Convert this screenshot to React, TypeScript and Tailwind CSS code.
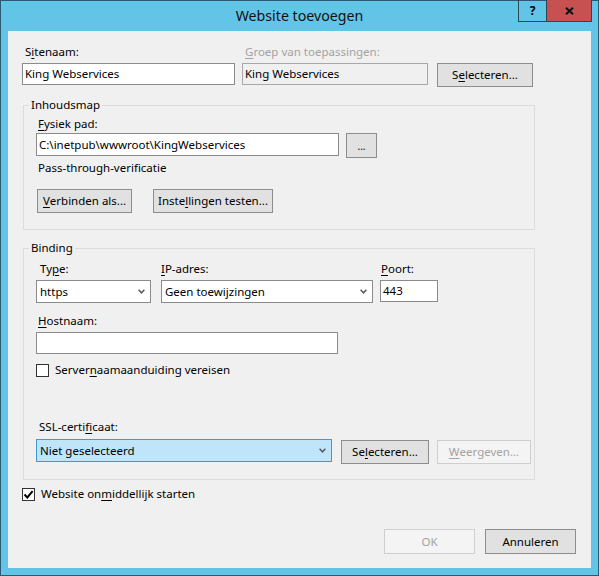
import type { ReactNode } from "react";

function U({ children }: { children: ReactNode }) {
  return <span className="underline decoration-1 underline-offset-[2px]">{children}</span>;
}

function TextBox({
  value,
  className = "",
  disabled = false,
}: {
  value?: string;
  className?: string;
  disabled?: boolean;
}) {
  return (
    <div
      className={`flex items-center border px-[2px] leading-[16px] ${
        disabled ? "border-[#a8a8a8] bg-[#f0f0f0]" : "border-[#8b8b8b] bg-white"
      } ${className}`}
    >
      {value}
    </div>
  );
}

function Chevron({ color = "#5a5a5a" }: { color?: string }) {
  return (
    <svg width="7" height="5" viewBox="0 0 7 5" fill="none">
      <path d="M0.6 0.8 3.5 3.8 6.4 0.8" stroke={color} strokeWidth="1.5" />
    </svg>
  );
}

function ComboBox({
  value,
  className = "",
  focused = false,
}: {
  value: string;
  className?: string;
  focused?: boolean;
}) {
  return (
    <div
      className={`flex h-[23px] items-center border pl-[3px] leading-[16px] ${
        focused ? "border-[#3c9bdc] bg-[#bfe5fb]" : "border-[#8b8b8b] bg-white"
      } ${className}`}
    >
      <span className="flex-1">{value}</span>
      <span className="flex w-[17px] justify-center">
        <Chevron />
      </span>
    </div>
  );
}

function Button({
  children,
  className = "",
  disabled = false,
}: {
  children: ReactNode;
  className?: string;
  disabled?: boolean;
}) {
  return (
    <button
      type="button"
      disabled={disabled}
      className={`flex h-[24px] items-center justify-center border leading-[16px] ${
        disabled
          ? "border-[#cfcfcf] bg-[#f4f4f4] text-[#a3a3a3]"
          : "border-[#8d8d8d] bg-[#e1e1e1] text-black"
      } ${className}`}
    >
      {children}
    </button>
  );
}

function CheckBox({ checked = false }: { checked?: boolean }) {
  return (
    <span className="flex h-[13px] w-[13px] items-center justify-center border border-[#333333] bg-white">
      {checked ? (
        <svg width="11" height="11" viewBox="0 0 11 11" fill="none">
          <path d="M1.5 5.5 4.3 8.4 9.6 2.2" stroke="#000" strokeWidth="2" />
        </svg>
      ) : null}
    </span>
  );
}

export default function App() {
  return (
    <div className="h-[576px] w-[599px] border border-[#2b5a72] bg-[#62c5e8] font-['Noto_Sans',sans-serif] text-[11.5px] text-black">
      {/* title bar */}
      <div className="relative h-[30px]">
        <div className="text-center text-[14.2px] leading-[29px] text-[#111]">Website toevoegen</div>
        <div className="absolute right-[6px] top-[-1px] flex h-[22px] border border-t-0 border-[#2c4656]">
          <div className="flex w-[28px] items-center justify-center border-r border-[#2c4656] text-[12px] font-bold leading-none">
            ?
          </div>
          <div className="flex w-[44px] items-center justify-center bg-[#c75050]">
            <svg width="9" height="8" viewBox="0 0 9 8" fill="none">
              <path d="M1 0.8 8 7.2M8 0.8 1 7.2" stroke="#111" strokeWidth="2" />
            </svg>
          </div>
        </div>
      </div>

      {/* client area */}
      <div className="ml-[7px] flex h-[537px] w-[583px] flex-col bg-[#f0f0f0] pt-[13px] leading-[16px]">
        <div className="flex h-[16px]">
          <div className="ml-[17px] w-[220px]">
            S<U>i</U>tenaam:
          </div>
          <div className="text-[#a3a3a3]">
            <U>G</U>roep van toepassingen:
          </div>
        </div>
        <div className="mt-[3px] flex items-start">
          <TextBox value="King Webservices" className="ml-[14px] h-[22px] w-[213px]" />
          <TextBox value="King Webservices" disabled className="ml-[7px] h-[22px] w-[186px]" />
          <Button className="ml-[9px] w-[96px]">
            S<U>e</U>lecteren...
          </Button>
        </div>

        <fieldset className="ml-[15px] mt-[10px] w-[512px] border border-[#dcdcdc] pb-[16px]">
          <legend className="ml-[5px] px-[2px] leading-[16px]">Inhoudsmap</legend>
          <div className="ml-[14px] mt-[3px] h-[16px]">
            <U>F</U>ysiek pad:
          </div>
          <div className="mt-[1px] flex items-start">
            <TextBox value="C:\inetpub\wwwroot\KingWebservices" className="ml-[12px] h-[23px] w-[303px]" />
            <Button className="ml-[7px] h-[25px] w-[31px] text-[10px]">...</Button>
          </div>
          <div className="ml-[14px] mt-[2px] h-[16px]">Pass-through-verificatie</div>
          <div className="mt-[13px] flex">
            <Button className="ml-[13px] w-[95px]">
              <U>V</U>erbinden als...
            </Button>
            <Button className="ml-[21px] w-[120px]">
              Inste<U>l</U>lingen testen...
            </Button>
          </div>
        </fieldset>

        <fieldset className="ml-[15px] mt-[10px] w-[512px] border border-[#dcdcdc] pb-[15px]">
          <legend className="ml-[5px] px-[2px] leading-[16px]">Binding</legend>
          <div className="mt-[5px] flex items-start">
            <div className="ml-[12px] flex w-[115px] flex-col">
              <div className="h-[16px] pl-[4px]">
                Ty<U>p</U>e:
              </div>
              <ComboBox value="https" className="mt-[3px]" />
            </div>
            <div className="ml-[10px] flex w-[212px] flex-col">
              <div className="h-[16px]">
                <U>I</U>P-adres:
              </div>
              <ComboBox value="Geen toewijzingen" className="mt-[3px]" />
            </div>
            <div className="ml-[7px] flex w-[58px] flex-col">
              <div className="h-[16px] pl-[1px]">
                <U>P</U>oort:
              </div>
              <TextBox value="443" className="mt-[3px] h-[22px]" />
            </div>
          </div>
          <div className="ml-[14px] mt-[10px] h-[16px]">
            <U>H</U>ostnaam:
          </div>
          <TextBox className="ml-[12px] mt-[3px] h-[22px] w-[302px]" />
          <div className="mt-[8px] flex h-[16px] items-center">
            <span className="ml-[12px]">
              <CheckBox />
            </span>
            <span className="ml-[6px]">
              Server<U>n</U>aamaanduiding vereisen
            </span>
          </div>
          <div className="ml-[15px] mt-[41px] h-[16px]">
            SSL-certi<U>f</U>icaat:
          </div>
          <div className="mt-[4px] flex items-start">
            <ComboBox value="Niet geselecteerd" focused className="ml-[12px] w-[296px]" />
            <Button className="ml-[9px] mt-[1px] w-[88px]">
              Se<U>l</U>ecteren...
            </Button>
            <Button disabled className="ml-[8px] mt-[1px] w-[94px]">
              <U>W</U>eergeven...
            </Button>
          </div>
        </fieldset>

        <div className="mt-[6px] flex h-[16px] items-center">
          <span className="ml-[14px]">
            <CheckBox checked />
          </span>
          <span className="ml-[6px]">
            Website on<U>m</U>iddellijk starten
          </span>
        </div>

        <div className="mt-[27px] flex justify-end gap-[10px] pr-[15px]">
          <Button disabled className="h-[25px] w-[91px]">
            OK
          </Button>
          <Button className="h-[25px] w-[91px]">Annuleren</Button>
        </div>
      </div>
    </div>
  );
}
